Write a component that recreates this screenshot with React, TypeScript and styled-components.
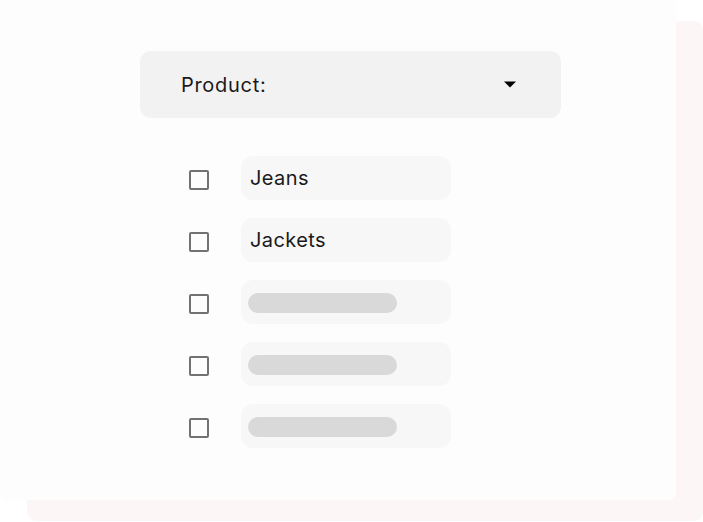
import React from "react";
import styled, { createGlobalStyle } from "styled-components";

const Global = createGlobalStyle`
  html, body { margin: 0; padding: 0; background: #ffffff; }
  body { font-family: Inter, "Noto Sans", sans-serif; }
`;

const Page = styled.div`
  position: relative;
  width: 703px;
  height: 522px;
  overflow: hidden;
  background: #ffffff;
`;

const BackCard = styled.div`
  position: absolute;
  left: 27px;
  top: 21px;
  right: 0;
  bottom: 1px;
  background: #fcf6f6;
  border-radius: 9px;
`;

const MainCard = styled.div`
  position: relative;
  z-index: 1;
  width: 676px;
  height: 500px;
  box-sizing: border-box;
  padding-top: 51px;
  background: #fdfdfd;
  border-radius: 0 0 7px 7px;
  display: flex;
  flex-direction: column;
`;

const Dropdown = styled.div`
  margin-left: 140px;
  width: 421px;
  height: 67px;
  box-sizing: border-box;
  padding: 0 45px 0 41px;
  background: #f2f2f2;
  border-radius: 11px;
  display: flex;
  align-items: center;
  justify-content: space-between;
`;

const Label = styled.span<{ $spacing?: number }>`
  font-size: 20px;
  font-weight: 400;
  letter-spacing: ${(p) => p.$spacing ?? 0.4}px;
  color: #1a1a1a;
`;

const List = styled.div`
  margin-top: 38px;
  margin-left: 189px;
  display: flex;
  flex-direction: column;
  gap: 18px;
`;

const Row = styled.div`
  display: flex;
  align-items: center;
  gap: 32px;
`;

const Checkbox = styled.div`
  width: 20px;
  height: 20px;
  box-sizing: border-box;
  border: 2px solid #727272;
  border-radius: 2px;
  margin-top: 3px;
`;

const Pill = styled.div`
  width: 210px;
  height: 44px;
  box-sizing: border-box;
  padding-left: 7px;
  background: #f7f7f7;
  border-radius: 12px;
  display: flex;
  align-items: center;
`;

const ItemText = styled(Label)`
  padding-left: 2px;
`;

const Skeleton = styled.div`
  width: 149px;
  height: 20px;
  background: #d9d9d9;
  border-radius: 10px;
  margin-top: 1px;
`;

const Caret = () => (
  <svg width="12" height="7" viewBox="0 0 12 7">
    <path d="M0 0.5 H12 L6 6.5 Z" fill="#000" />
  </svg>
);

const items: (string | null)[] = ["Jeans", "Jackets", null, null, null];

export default function App() {
  return (
    <>
      <Global />
      <Page>
        <BackCard />
        <MainCard>
          <Dropdown>
            <Label $spacing={0.7}>Product:</Label>
            <Caret />
          </Dropdown>
          <List>
            {items.map((it, i) => (
              <Row key={i}>
                <Checkbox />
                <Pill>{it ? <ItemText>{it}</ItemText> : <Skeleton />}</Pill>
              </Row>
            ))}
          </List>
        </MainCard>
      </Page>
    </>
  );
}
